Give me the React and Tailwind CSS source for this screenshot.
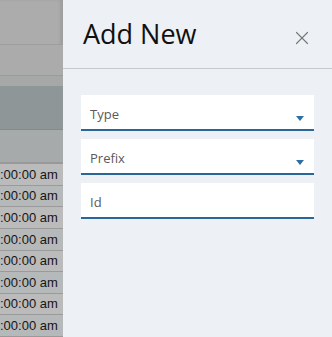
import { X } from "lucide-react";

const ROWS = 8;

function Field({ label, select }) {
  return (
    <div className="relative h-9 bg-white border-b-2 border-[#2b6699] flex items-center pl-[9px] pt-[5px]">
      <span className="text-[13px] text-[#5a5a5a]">{label}</span>
      {select && (
        <span className="absolute right-[10px] top-[21px] w-0 h-0 border-l-[4px] border-r-[4px] border-t-[5px] border-l-transparent border-r-transparent border-t-[#2d6fa3]" />
      )}
    </div>
  );
}

export default function App() {
  return (
    <div className="w-[332px] h-[337px] flex overflow-hidden" style={{ fontFamily: "'Open Sans', 'Liberation Sans', sans-serif" }}>
      {/* Dimmed table behind */}
      <div className="w-[63px] shrink-0 flex flex-col bg-[#acacac] shadow-[inset_-3px_0_3px_rgba(0,0,0,0.08)]">
        <div className="h-[45px] border-b border-[#9e9e9e]" />
        <div className="h-[31px] border-b border-[#9a9a9a] bg-[#ababab]" />
        <div className="h-[10px] bg-[#a6a8a8]" />
        <div className="h-[45px] bg-[#8f9698] border-b border-[#848a8c]" />
        <div className="h-[34px] bg-[#a7aaab] border-b-2 border-[#999]" />
        {Array.from({ length: ROWS }).map((_, i) => (
          <div
            key={i}
            className={`h-[21.6px] shrink-0 flex items-center border-b border-[#9a9a9a] text-[13px] text-[#151515] whitespace-nowrap ${
              i % 2 ? "bg-[#b6b9b9]" : "bg-[#bbbbbb]"
            }`}
            style={{ fontFamily: "'Liberation Sans', sans-serif" }}
          >
            :00:00 am
          </div>
        ))}
      </div>

      {/* Side panel */}
      <div className="flex-1 bg-[#edf0f5] flex flex-col">
        <div className="h-[69px] shrink-0 border-b border-[#c6c8cb] flex items-start justify-between pl-[20px] pr-[19px]">
          <h1 className="text-[27px] leading-none mt-[20px] text-[#111]">Add New</h1>
          <X className="mt-[27px] text-[#7a7a7a]" size={22} strokeWidth={1.3} />
        </div>
        <div className="px-[18px] pt-[26px] flex flex-col gap-2">
          <Field label="Type" select />
          <Field label="Prefix" select />
          <Field label="Id" />
        </div>
      </div>
    </div>
  );
}
